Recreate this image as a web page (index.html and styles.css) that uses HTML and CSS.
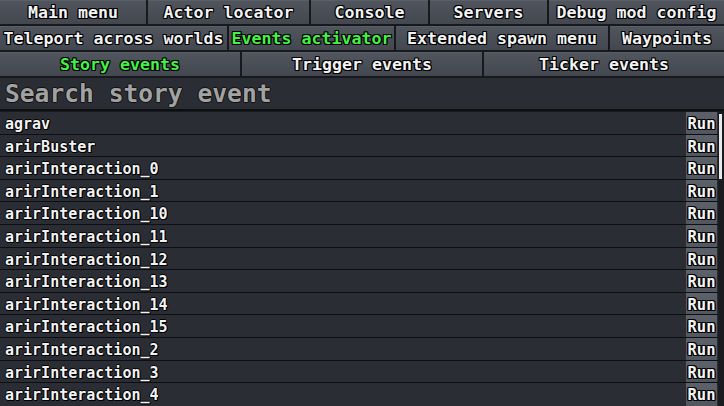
FILE: index.html
```html
<!DOCTYPE html>
<html>
<head>
<meta charset="utf-8">
<link rel="stylesheet" href="styles.css">
</head>
<body>
<div class="app">
  <div class="tabrow">
    <div class="btn w146">Main menu</div>
    <div class="btn w161">Actor locator</div>
    <div class="btn w117">Console</div>
    <div class="btn w117">Servers</div>
    <div class="btn grow">Debug mod config</div>
  </div>
  <div class="tabrow">
    <div class="btn w227">Teleport across worlds</div>
    <div class="btn w165 active">Events activator</div>
    <div class="btn w212">Extended spawn menu</div>
    <div class="btn grow">Waypoints</div>
  </div>
  <div class="tabrow">
    <div class="btn grow active">Story events</div>
    <div class="btn grow">Trigger events</div>
    <div class="btn grow">Ticker events</div>
  </div>
  <div class="search">Search story event</div>
  <div class="listwrap">
    <div class="list">
      <div class="row"><span class="name">agrav</span><span class="run">Run</span></div>
      <div class="row"><span class="name">arirBuster</span><span class="run">Run</span></div>
      <div class="row"><span class="name">arirInteraction_0</span><span class="run">Run</span></div>
      <div class="row"><span class="name">arirInteraction_1</span><span class="run">Run</span></div>
      <div class="row"><span class="name">arirInteraction_10</span><span class="run">Run</span></div>
      <div class="row"><span class="name">arirInteraction_11</span><span class="run">Run</span></div>
      <div class="row"><span class="name">arirInteraction_12</span><span class="run">Run</span></div>
      <div class="row"><span class="name">arirInteraction_13</span><span class="run">Run</span></div>
      <div class="row"><span class="name">arirInteraction_14</span><span class="run">Run</span></div>
      <div class="row"><span class="name">arirInteraction_15</span><span class="run">Run</span></div>
      <div class="row"><span class="name">arirInteraction_2</span><span class="run">Run</span></div>
      <div class="row"><span class="name">arirInteraction_3</span><span class="run">Run</span></div>
      <div class="row last"><span class="name">arirInteraction_4</span><span class="run">Run</span></div>
    </div>
    <div class="scroll"><div class="thumb"></div></div>
  </div>
</div>
</body>
</html>
```
FILE: styles.css
```css
html, body {
  margin: 0;
  padding: 0;
  background: #18191d;
  overflow: hidden;
}
.app {
  width: 724px;
  height: 406px;
  display: flex;
  flex-direction: column;
  gap: 2px;
  font-family: "DejaVu Sans Mono", "Liberation Mono", monospace;
  font-weight: bold;
  overflow: hidden;
}
.tabrow {
  display: flex;
  gap: 2px;
  height: 24px;
  flex: none;
}
.btn {
  height: 24px;
  display: flex;
  align-items: center;
  justify-content: center;
  background: linear-gradient(#51555d, #43474f);
  box-shadow: inset 0 1px 0 #5a5e66;
  color: #f2f2f2;
  font-size: 16.6px;
  white-space: nowrap;
  text-shadow: 1px 0 #000, -1px 0 #000, 0 1px #000, 0 -1px #000, 1px 1px #000, -1px -1px #000, 1px -1px #000, -1px 1px #000;
}
.btn.active { color: #44f244; }
.w146 { width: 146px; }
.w161 { width: 161px; }
.w117 { width: 117px; }
.w227 { width: 227px; }
.w165 { width: 165px; }
.w212 { width: 212px; }
.grow { flex: 1; }
.search {
  flex: none;
  height: 31px;
  background: #2b2d34;
  color: #a2a2a2;
  font-size: 24.6px;
  line-height: 31px;
  padding-left: 5px;
  text-shadow: 1px 0 #111, -1px 0 #111, 0 1px #111, 0 -1px #111;
  border-bottom: 2px solid #0e0f12;
}
.listwrap {
  flex: 1;
  display: flex;
  margin-top: -1px;
  min-height: 0;
}
.list {
  flex: 1;
  display: flex;
  flex-direction: column;
}
.row {
  flex: none;
  height: 21.6px;
  border-bottom: 1px solid #0e0f12;
  display: flex;
  background: #2b2d34;
}
.row.last {
  border-bottom: 0;
  height: 22.6px;
}
.name {
  flex: 1;
  padding-left: 5px;
  padding-top: 4px;
  color: #f2f2f2;
  font-size: 15px;
  line-height: 17.6px;
  text-shadow: 1px 0 #000, -1px 0 #000, 0 1px #000, 0 -1px #000, 1px 1px #000;
}
.run {
  width: 31px;
  margin-left: 2px;
  margin-right: 1px;
  padding-top: 4px;
  background: linear-gradient(#5d6169, #52565e);
  color: #f4f4f4;
  font-size: 15.5px;
  line-height: 17.6px;
  text-align: center;
  text-shadow: 1px 0 #000, -1px 0 #000, 0 1px #000, 0 -1px #000, 1px 1px #000, -1px -1px #000, 1px -1px #000, -1px 1px #000;
}
.scroll {
  width: 6px;
  background: #1a1b1f;
}
.thumb {
  width: 3px;
  margin-left: 1px;
  margin-top: 2px;
  height: 65px;
  background: #e8e8e8;
}
```
